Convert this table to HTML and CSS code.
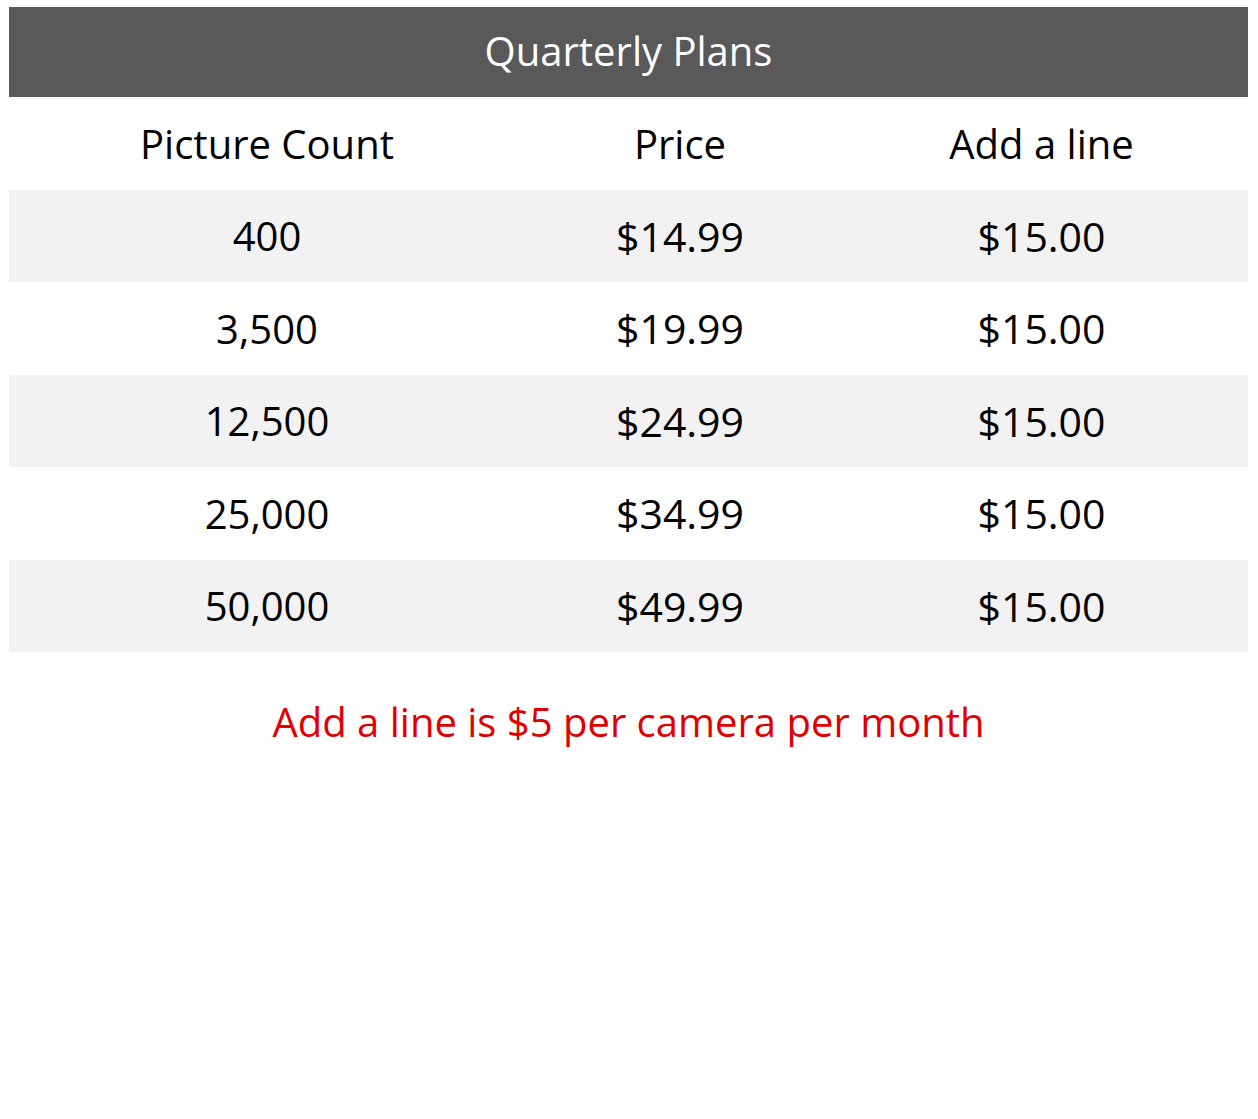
FILE: index.html
```html
<!DOCTYPE html>
<html lang="en">
<head>
<meta charset="utf-8">
<title>Quarterly Plans</title>
<link rel="stylesheet" href="styles.css">
</head>
<body>
<div class="page">
  <div class="title">Quarterly Plans</div>
  <div class="table">
    <div class="row head"><div>Picture Count</div><div>Price</div><div>Add a line</div></div>
    <div class="row alt"><div>400</div><div>$14.99</div><div>$15.00</div></div>
    <div class="row"><div>3,500</div><div>$19.99</div><div>$15.00</div></div>
    <div class="row alt"><div>12,500</div><div>$24.99</div><div>$15.00</div></div>
    <div class="row"><div>25,000</div><div>$34.99</div><div>$15.00</div></div>
    <div class="row alt"><div>50,000</div><div>$49.99</div><div>$15.00</div></div>
  </div>
  <p class="note">Add a line is $5 per camera per month</p>
</div>
</body>
</html>
```
FILE: styles.css
```css
html, body {
  margin: 0;
  background: #ffffff;
}
.page {
  padding: 7px 10px 0 9px;
  font-family: "Open Sans", "Liberation Sans", sans-serif;
  color: #000;
}
.title {
  height: 90px;
  background: #595959;
  color: #ffffff;
  display: flex;
  align-items: center;
  justify-content: center;
  font-size: 40px;
  padding-bottom: 3px;
  box-sizing: border-box;
}
.row {
  display: grid;
  grid-template-columns: 516px 310px 1fr;
  height: 92.5px;
  align-items: center;
  font-size: 40px;
}
.row > div {
  text-align: center;
}
.row.alt {
  background: #f2f2f2;
}
.row:not(.head) > div:not(:first-child) {
  font-size: 41px;
}
.note {
  margin: 42px 0 0;
  text-align: center;
  color: #e00000;
  font-size: 40px;
}
```
